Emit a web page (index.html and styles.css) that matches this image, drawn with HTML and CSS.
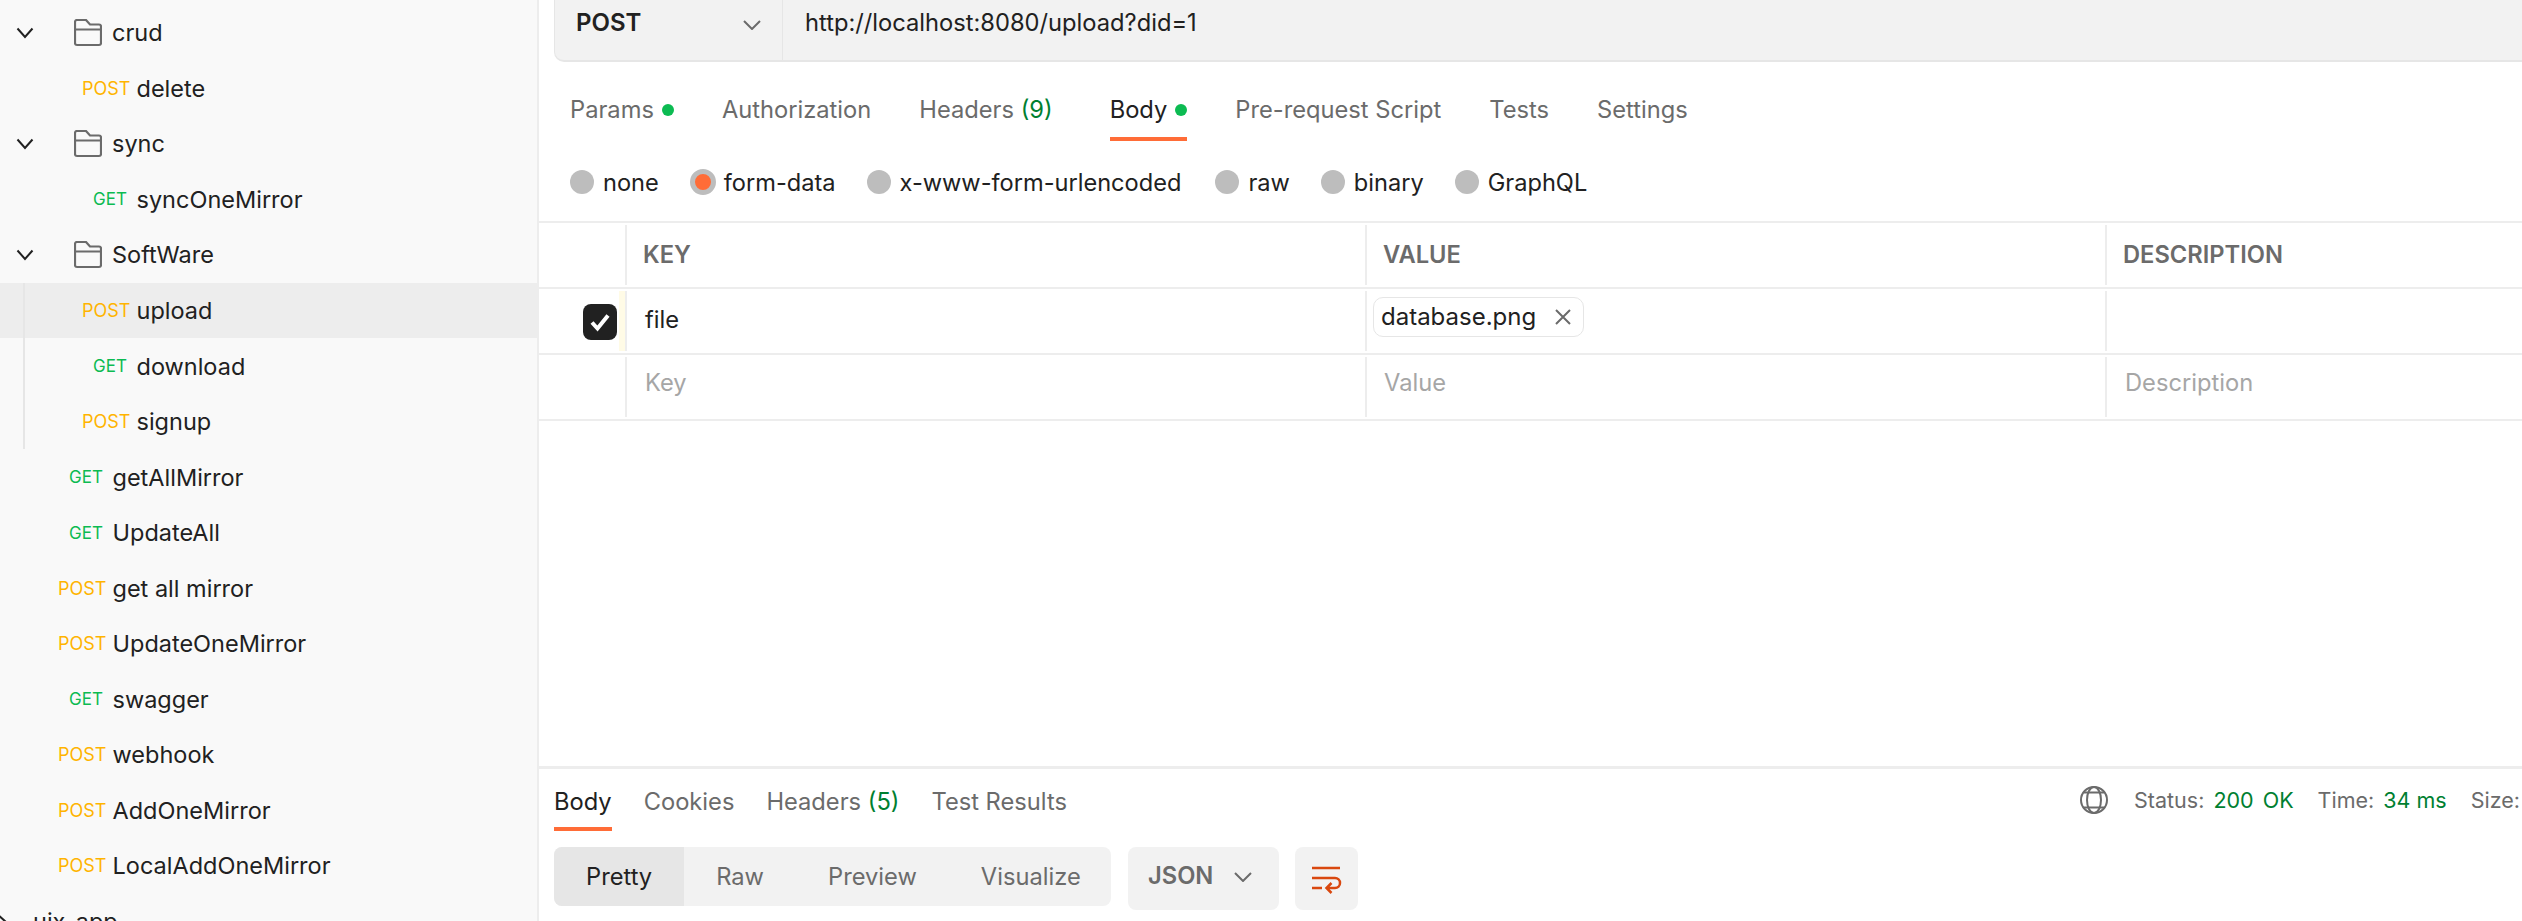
FILE: index.html
```html
<!DOCTYPE html>
<html lang="en">
<head>
<meta charset="utf-8">
<title>Postman</title>
<link rel="stylesheet" href="styles.css">
</head>
<body>
<div class="app">
  <aside class="sidebar">
    <div class="tree">
      <div class="row folder d1">
        <svg class="chev" viewBox="0 0 18 12"><path d="M1.500 1.500 9 10l7.500-8.500"/></svg>
        <svg class="folder-icon" viewBox="0 0 28 28"><path d="M1 3a2 2 0 0 1 2-2h9l4 4.500h9a2 2 0 0 1 2 2V24a2 2 0 0 1-2 2H3a2 2 0 0 1-2-2zM1 10.500h26"/></svg>
        <span class="name">crud</span>
      </div>
      <div class="row req d2"><span class="m post">POST</span><span class="name">delete</span></div>
      <div class="row folder d1">
        <svg class="chev" viewBox="0 0 18 12"><path d="M1.500 1.500 9 10l7.500-8.500"/></svg>
        <svg class="folder-icon" viewBox="0 0 28 28"><path d="M1 3a2 2 0 0 1 2-2h9l4 4.500h9a2 2 0 0 1 2 2V24a2 2 0 0 1-2 2H3a2 2 0 0 1-2-2zM1 10.500h26"/></svg>
        <span class="name">sync</span>
      </div>
      <div class="row req d2"><span class="m get">GET</span><span class="name">syncOneMirror</span></div>
      <div class="row folder d1">
        <svg class="chev" viewBox="0 0 18 12"><path d="M1.500 1.500 9 10l7.500-8.500"/></svg>
        <svg class="folder-icon" viewBox="0 0 28 28"><path d="M1 3a2 2 0 0 1 2-2h9l4 4.500h9a2 2 0 0 1 2 2V24a2 2 0 0 1-2 2H3a2 2 0 0 1-2-2zM1 10.500h26"/></svg>
        <span class="name">SoftWare</span>
      </div>
      <div class="group">
        <div class="row req d2 active"><span class="m post">POST</span><span class="name">upload</span></div>
        <div class="row req d2"><span class="m get">GET</span><span class="name">download</span></div>
        <div class="row req d2"><span class="m post">POST</span><span class="name">signup</span></div>
      </div>
      <div class="row req d1r"><span class="m get">GET</span><span class="name">getAllMirror</span></div>
      <div class="row req d1r"><span class="m get">GET</span><span class="name">UpdateAll</span></div>
      <div class="row req d1r"><span class="m post">POST</span><span class="name">get all mirror</span></div>
      <div class="row req d1r"><span class="m post">POST</span><span class="name">UpdateOneMirror</span></div>
      <div class="row req d1r"><span class="m get">GET</span><span class="name">swagger</span></div>
      <div class="row req d1r"><span class="m post">POST</span><span class="name">webhook</span></div>
      <div class="row req d1r"><span class="m post">POST</span><span class="name">AddOneMirror</span></div>
      <div class="row req d1r"><span class="m post">POST</span><span class="name">LocalAddOneMirror</span></div>
      <div class="row folder d0">
        <svg class="chev-right" viewBox="0 0 12 18"><path d="M1.500 1.500 10 9l-8.500 7.500"/></svg>
        <span class="name">uix-app</span>
      </div>
    </div>
  </aside>

  <main class="main">
    <section class="request">
      <div class="urlbar">
        <div class="method-select">
          <span class="method-label">POST</span>
          <svg class="select-chev" viewBox="0 0 18 10"><path d="M1 1l8 8 8-8"/></svg>
        </div>
        <div class="url">http://localhost:8080/upload?did=1</div>
      </div>

      <nav class="tabs req-tabs">
        <span class="tab">Params<i class="dot"></i></span>
        <span class="tab">Authorization</span>
        <span class="tab">Headers <em class="count">(9)</em></span>
        <span class="tab current body-tab">Body<i class="dot"></i></span>
        <span class="tab">Pre-request Script</span>
        <span class="tab">Tests</span>
        <span class="tab">Settings</span>
      </nav>

      <div class="radios">
        <label class="radio"><i class="circle"></i>none</label>
        <label class="radio"><i class="circle on"></i>form-data</label>
        <label class="radio"><i class="circle"></i>x-www-form-urlencoded</label>
        <label class="radio radio-raw"><i class="circle"></i>raw</label>
        <label class="radio"><i class="circle"></i>binary</label>
        <label class="radio"><i class="circle"></i>GraphQL</label>
      </div>

      <div class="table">
        <div class="tr head">
          <div class="td check"></div>
          <div class="td">KEY</div>
          <div class="td">VALUE</div>
          <div class="td">DESCRIPTION</div>
        </div>
        <div class="tr">
          <div class="td check">
            <span class="box"><svg viewBox="0 0 34 36"><path d="M9 18.500l5.500 6L25 11.500"/></svg></span>
            <i class="stripe"></i>
          </div>
          <div class="td cell file">file</div>
          <div class="td chip-cell">
            <span class="chip">database.png<svg class="x" viewBox="0 0 16 16"><path d="M1 1l14 14M15 1 1 15"/></svg></span>
          </div>
          <div class="td"></div>
        </div>
        <div class="tr">
          <div class="td check"></div>
          <div class="td cell ph">Key</div>
          <div class="td cell ph val">Value</div>
          <div class="td cell ph">Description</div>
        </div>
      </div>
    </section>

    <section class="response">
      <div class="res-head">
        <nav class="tabs res-tabs">
          <span class="tab current">Body</span>
          <span class="tab">Cookies</span>
          <span class="tab">Headers <em class="count">(5)</em></span>
          <span class="tab">Test Results</span>
        </nav>
        <div class="status">
          <svg class="globe" viewBox="0 0 28 28"><circle cx="14" cy="14" r="13"/><ellipse cx="14" cy="14" rx="7" ry="13"/><path d="M3.500 6.500h21M3.500 21.500h21"/></svg>
          <span class="st">Status: <b class="ok">200 OK</b></span>
          <span class="st">Time: <b>34 ms</b></span>
          <span class="st">Size:</span>
        </div>
      </div>
      <div class="toolbar">
        <div class="segments">
          <span class="seg active-seg">Pretty</span>
          <span class="seg">Raw</span>
          <span class="seg">Preview</span>
          <span class="seg">Visualize</span>
        </div>
        <div class="lang"><span>JSON</span><svg class="select-chev" viewBox="0 0 18 10"><path d="M1 1l8 8 8-8"/></svg></div>
        <div class="wrap">
          <svg viewBox="0 0 28 26"><path d="M0 1h28M0 11h23a5 5 0 0 1 0 10h-8M0 21h10M19.500 16l-5 5 5 5"/></svg>
        </div>
      </div>
    </section>
  </main>
</div>
</body>
</html>
```
FILE: styles.css
```css
* { box-sizing: border-box; }
html, body { margin: 0; height: 100%; }
body {
  width: 2522px;
  height: 921px;
  overflow: hidden;
  background: #fff;
  color: #212121;
  font-family: Inter, "Noto Sans", sans-serif;
  font-size: 23.700px;
}
.app { display: flex; height: 921px; overflow: hidden; }

/* sidebar */
.sidebar {
  flex: 0 0 539px;
  height: 921px;
  background: #f9f9f9;
  border-right: 2px solid #ededed;
  padding-top: 5px;
  overflow: hidden;
  font-size: 23.500px;
}
.row {
  position: relative;
  display: flex;
  align-items: center;
  height: 55.550px;
  white-space: nowrap;
}
.group { position: relative; }
.group::before {
  content: "";
  position: absolute;
  z-index: 1;
  left: 23px;
  top: 0;
  bottom: 0;
  width: 2px;
  background: #e6e6e6;
}
.active { background: #ededed; }
.name { display: block; }
.m {
  display: block;
  width: 45px;
  margin-right: 9.500px;
  text-align: right;
  font-size: 18px;
}
.post { color: #ffb400; }
.get { color: #0cbb52; font-size: 17px; }
.d2 { padding-left: 82px; }
.d1r { padding-left: 58px; }
.chev {
  position: absolute;
  left: 16px;
  top: 22px;
  width: 18px;
  height: 12px;
  fill: none;
  stroke: #212121;
  stroke-width: 2px;
}
.chev-right {
  position: absolute;
  left: -4px;
  top: 19px;
  width: 12px;
  height: 18px;
  fill: none;
  stroke: #212121;
  stroke-width: 2px;
}
.folder-icon {
  margin-left: 74px;
  margin-right: 10px;
  width: 28px;
  height: 28px;
  fill: none;
  stroke: #6b6b6b;
  stroke-width: 2.200px;
}
.d0 .name { margin-left: 33px; }

/* main */
.main { flex: 1 1 auto; min-width: 0; display: flex; flex-direction: column; height: 921px; }
.request { height: 227px; flex: 0 0 auto; }
.urlbar {
  display: flex;
  height: 62px;
  margin-left: 15px;
  background: #f2f2f2;
  border-bottom: 2px solid #e6e6e6;
  border-left: 1px solid #e6e6e6;
  border-bottom-left-radius: 10px;
}
.method-select {
  display: flex;
  flex: 0 0 228px;
  justify-content: space-between;
  padding: 6px 21px 0 21px;
  border-right: 1px solid #e6e6e6;
}
.method-label { font-size: 24px; font-weight: 600; line-height: 34px; }
.select-chev { width: 18px; height: 10px; margin-top: 14px; fill: none; stroke: #6b6b6b; stroke-width: 2px; }
.url { padding: 6px 0 0 22px; line-height: 34px; }

.tabs { display: flex; color: #6b6b6b; white-space: nowrap; }
.req-tabs { margin: 30px 0 0 31px; gap: 48px; height: 49px; }
.tab { display: block; height: 100%; line-height: 36px; position: relative; }
.current { color: #212121; }
.current::after {
  content: "";
  position: absolute;
  left: 0; right: 0; bottom: 0;
  height: 4px;
  background: #ff6c37;
}
.body-tab { margin-left: 9px; }
.dot {
  display: inline-block;
  width: 12px;
  height: 12px;
  margin-left: 8px;
  border-radius: 50%;
  background: #0cbb52;
  vertical-align: 2px;
}
.count { font-style: normal; color: #007f31; }

.radios { display: flex; gap: 31px; margin: 23px 0 0 31px; height: 36px; align-items: center; font-size: 23.600px; }
.radio { display: flex; align-items: center; }
.radio-raw { margin-left: 3px; }
.circle {
  display: block;
  width: 24px;
  height: 24px;
  margin-right: 9px;
  border-radius: 50%;
  background: #bdbdbd;
}
.circle.on {
  width: 26px;
  height: 26px;
  margin-right: 8px;
  border: 5px solid #bdbdbd;
  background: #ff6c37;
}

/* table */
.table { margin-top: 21px; border-top: 2px solid #ededed; }
.tr {
  display: grid;
  grid-template-columns: 86px 740px 740px 1fr;
  height: 66px;
  border-bottom: 2px solid #ededed;
}
.td {
  display: flex;
  align-items: center;
  position: relative;
  padding-left: 17px;
  margin: 2px 0;
  border-left: 2px solid #ededed;
}
.td.check { border-left: 0; padding: 0; }
.head .td { font-weight: 600; color: #6b6b6b; padding-left: 16px; padding-bottom: 1px; }
.box {
  display: block;
  position: absolute;
  left: 44px;
  top: 13px;
  width: 34px;
  height: 36px;
  border-radius: 8px;
  background: #212121;
}
.box svg { display: block; width: 34px; height: 36px; fill: none; stroke: #fff; stroke-width: 4px; }
.stripe {
  position: absolute;
  right: 0;
  top: 0;
  width: 6px;
  height: 60px;
  background: #fffbe6;
}
.cell { padding-left: 18px; }
.file { padding-bottom: 4px; }
.ph { color: #a6a6a6; padding-bottom: 10px; }
.ph.val { padding-left: 17px; }
.chip-cell { padding-left: 6px; }
.chip {
  display: flex;
  align-items: center;
  height: 40px;
  padding: 0 12px 0 7px;
  border: 1px solid #e6e6e6;
  border-radius: 10px;
  margin-bottom: 9px;
  font-size: 24px;
}
.x { width: 16px; height: 16px; margin-left: 19px; fill: none; stroke: #6b6b6b; stroke-width: 2px; }

/* response */
.response {
  margin-top: auto;
  flex: 0 0 auto;
  height: 155px;
  border-top: 3px solid #ededed;
  padding-left: 15px;
}
.res-head { display: flex; justify-content: space-between; }
.res-tabs { margin-top: 15px; height: 47px; gap: 32px; }
.status { display: flex; align-items: center; height: 48px; margin-top: 7px; padding-right: 2px; font-size: 21.500px; color: #6b6b6b; gap: 24px; white-space: nowrap; }
.st b { font-weight: 400; color: #007f31; margin-left: 3px; }
.st .ok { word-spacing: 3px; }
.globe { width: 28px; height: 28px; margin-right: 2px; fill: none; stroke: #6b6b6b; stroke-width: 2px; }
.toolbar { display: flex; margin-top: 16px; align-items: flex-start; }
.segments {
  display: flex;
  align-items: center;
  width: 557px;
  height: 59px;
  background: #f2f2f2;
  border-radius: 8px;
  overflow: hidden;
  color: #6b6b6b;
}
.seg { display: block; padding: 0 32px; line-height: 59px; }
.active-seg { background: #e6e6e6; color: #212121; }
.lang {
  display: flex;
  justify-content: space-between;
  width: 151px;
  height: 63px;
  margin-left: 17px;
  padding: 0 27px 0 20px;
  border-radius: 8px;
  background: #f2f2f2;
  color: #6b6b6b;
  font-weight: 600;
  line-height: 57px;
}
.lang .select-chev { margin-top: 25px; }
.wrap {
  width: 63px;
  height: 63px;
  margin-left: 16px;
  padding: 20px 0 0 17px;
  border-radius: 8px;
  background: #f2f2f2;
}
.wrap svg { display: block; width: 28px; height: 26px; fill: none; stroke: #d9480f; stroke-width: 2.500px; overflow: visible; }
```
